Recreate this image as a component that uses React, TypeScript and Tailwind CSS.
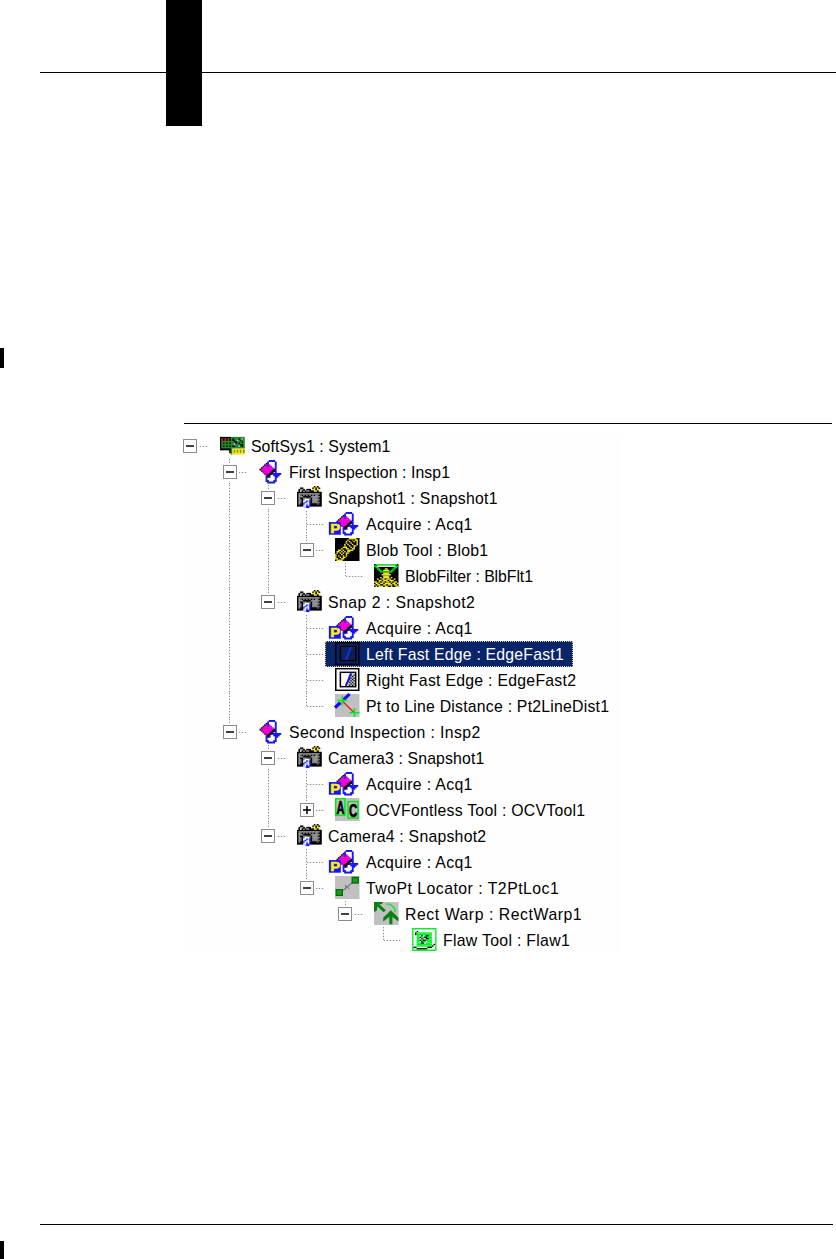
import { useLayoutEffect, useRef, useState, type ReactNode } from 'react'
import clsx from 'clsx'

type IconName =
  | 'board'
  | 'inspection'
  | 'camera'
  | 'acquire'
  | 'blob'
  | 'filter'
  | 'edge'
  | 'edgeSelected'
  | 'distance'
  | 'ocv'
  | 'locator'
  | 'warp'
  | 'flaw'

interface TreeNode {
  label: string
  width: number
  icon: IconName
  collapsed?: boolean
  selected?: boolean
  children?: TreeNode[]
}

// ── Tree data ─────────────────────────────────────────────────────────────────
const acquire: TreeNode = { label: 'Acquire : Acq1', width: 107, icon: 'acquire' }

const tree: TreeNode = {
  label: 'SoftSys1 : System1',
  width: 139,
  icon: 'board',
  children: [
    {
      label: 'First Inspection : Insp1',
      width: 161,
      icon: 'inspection',
      children: [
        {
          label: 'Snapshot1 : Snapshot1',
          width: 170,
          icon: 'camera',
          children: [
            acquire,
            {
              label: 'Blob Tool : Blob1',
              width: 122,
              icon: 'blob',
              children: [{ label: 'BlobFilter : BlbFlt1', width: 128, icon: 'filter' }],
            },
          ],
        },
        {
          label: 'Snap 2 : Snapshot2',
          width: 147,
          icon: 'camera',
          children: [
            acquire,
            { label: 'Left Fast Edge : EdgeFast1', width: 198, icon: 'edgeSelected', selected: true },
            { label: 'Right Fast Edge : EdgeFast2', width: 210, icon: 'edge' },
            { label: 'Pt to Line Distance : Pt2LineDist1', width: 243, icon: 'distance' },
          ],
        },
      ],
    },
    {
      label: 'Second Inspection : Insp2',
      width: 192,
      icon: 'inspection',
      children: [
        {
          label: 'Camera3 : Snapshot1',
          width: 156,
          icon: 'camera',
          children: [
            acquire,
            { label: 'OCVFontless Tool : OCVTool1', width: 219, icon: 'ocv', collapsed: true },
          ],
        },
        {
          label: 'Camera4 : Snapshot2',
          width: 158,
          icon: 'camera',
          children: [
            acquire,
            {
              label: 'TwoPt Locator : T2PtLoc1',
              width: 193,
              icon: 'locator',
              children: [
                {
                  label: 'Rect Warp : RectWarp1',
                  width: 177,
                  icon: 'warp',
                  children: [{ label: 'Flaw Tool : Flaw1', width: 127, icon: 'flaw' }],
                },
              ],
            },
          ],
        },
      ],
    },
  ],
}

// ── Pixel icons, 16 x 16 ──────────────────────────────────────────────────────
const palette: Record<string, string> = {
  K: '#000000',
  W: '#ffffff',
  G: '#909090',
  D: '#6a6a6a',
  Y: '#f4e62a',
  O: '#8a8200',
  B: '#1414f0',
  N: '#9db4ff',
  M: '#f000d8',
  P: '#90007c',
  R: '#d02818',
  E: '#1c8a26',
  L: '#00f022',
}

const bitmaps: Record<string, string[]> = {
  board: [
    '................',
    '................',
    'KKKKKKKEEEEEEEEE',
    'KRKRKRKEKEEEKENE',
    'KRKRKRKEKKENEKEE',
    'KEEEEEEEEKKEEEKE',
    'KEKEKEKEENKEKEEE',
    'KEEEEEEEENEEEKKE',
    'KEKEKEKEKKEENEKE',
    'KEEEEEEEEEEEEEEE',
    'KKKKKKKEYYYYYYYY',
    '......KEYOYOYOYO',
    '......KEYOYOYOYO',
    '.......EYYYYYYYY',
  ],
  inspection: [
    '.......BBBB.....',
    '......B....B....',
    '.....KB....B....',
    '....KMBM...B....',
    '...KMMBMM..B....',
    '..KMMMMMMM.B....',
    '.KMMMMMMMMKB....',
    '..PMMMMMMKKB....',
    '...PMMMMKK.B....',
    '....PMMKKBBBBBB.',
    '.....PKK..BBBB..',
    '.....BKB...BB...',
    '.....B.....B....',
    '.....B.....B....',
    '.....BB...BB....',
    '......BBBBB.....',
  ],
  camera: [
    '...........KYK..',
    '..KK......KYKYK.',
    '.KGGK.KKK.YYKYY.',
    '.KWK.KGGKKKYYK..',
    'KKKKKKKKKKKKKKKK',
    'KGGGGGGGGGGGGGDK',
    'KGDKDKDKDKDKGDKK',
    'KGGGKKKKKGGGGGDK',
    'KGKKGGDDDKGGGDKK',
    'KGDKDWWWDKGGGGDK',
    'KGDKWWBNBKGGGDKK',
    'KGDKNBNWBKGDGDDK',
    'KGKKBWNWBKKKKDKK',
    'KKKKNWBNBKKKKKKK',
    '.....NBB........',
  ],
  blob: [
    'KKKKKKKKKYYYYYKK',
    'KKKKKKKKYKKOKYYK',
    'KKKKKKKYKYKKYKYK',
    'KKKKKKKYKKYKKKYK',
    'KKKKKKYKYKKYKKYK',
    'KKKKKKYKKYKKYYKK',
    'KKKKKYYYKKYKYKKK',
    'KKKKYKKYYKKYYKKK',
    'KKYYKYKKYYYYKKKK',
    'KYYKYKYKYYKKKKKK',
    'KYKYKYKYYKKKKKKK',
    'YKKKYKKYKKKKKKKK',
    'YKYKKYKYKKKKKKKK',
    'YKKYKYYKKKKKKKKK',
    'YYKKYYKKKKKKKKKK',
    'KYYYYKKKKKKKKKKK',
  ],
  filter: [
    'KLLLLLLLLLLLLLLK',
    'LLWWWWWWWWWWWWLL',
    'KLLKKKKKKKKKKLLK',
    'KKLLKKKYYKKKLLKK',
    'KKKLLKYYYYKLLKKK',
    'KKKKLLLLLLLLKKKK',
    'KKKKKKYYYYKKKKKK',
    'KKKKKYYYYYYKKKKK',
    'KKKKKKYYYYKKKKKK',
    'KKKKYKYYYYKYKKKK',
    'KKYKKYYKYYYKKYKK',
    'KKKYYKYYYKYYYKKK',
    'YYKYKYYKYYKYKYYK',
    'KYYKYYKYYYYKYYKY',
    'YKYYKKYYKYYYKYYK',
    'KYKYYYKYYKKYKKYY',
  ],
  flaw: [
    'LLLLLLLLLLLLLLLL',
    'LWWWWWWWWWWWWWWL',
    'LWWKWWWWWWWWWWWL',
    'LWKLLLLLLLLLLWWL',
    'LWKLLLLLLLLLLWWL',
    'LWWLLWKWLKKLLWWL',
    'LWWLLKLLKKLLLWWL',
    'LWWLLWKLWKKLLWWL',
    'LWWLLKLKKLLLLWWL',
    'LWWLLWKLLWLLLWWL',
    'LWWLLLKKWLLLLWWL',
    'LWWLLLLLLLLLLWKL',
    'LWWLLLLLLLLLLKWL',
    'LKKWWWWWWWKKKWWL',
    'LWWKKKKKKKWWWWWL',
    'LLLLLLLLLLLLLLLL',
  ],
}

// Bitmaps that fill the whole square are drawn over a solid backing
const backings: Record<string, string> = { blob: '#000000', filter: '#000000', flaw: '#ffffff' }

// Runs overlap the next row a little so no seam shows at fractional scale
function Pixels({ name }: { name: string }) {
  const backing = backings[name]
  const skip = backing === '#000000' ? 'K' : backing ? 'W' : '.'

  return (
    <>
      {backing && <rect width="16" height="16" fill={backing} />}
      {bitmaps[name].flatMap((row, y) =>
        [...row.matchAll(/([A-Z])\1*/g)]
          .filter((run) => run[1] !== skip)
          .map((run) => (
            <rect
              key={`${run.index}-${y}`}
              x={run.index}
              y={y}
              width={run[0].length + (backing ? 0 : 0.15)}
              height={backing ? 1 : 1.35}
              fill={palette[run[1]]}
            />
          )),
      )}
    </>
  )
}

function EdgeDrawing({ paper, ink, dots }: { paper: string; ink: string; dots: string }) {
  return (
    <>
      <rect x="0.5" y="0.5" width="15" height="15" fill={paper} stroke="#000" />
      <rect x="3.5" y="3" width="10" height="10" fill={paper} stroke="#000" />
      <path d="M10.5 3.5H13V12.5H7.5Z" fill={dots} />
      <path d="M10 5h1M12 5h1M11 6h1M10 7h1M12 7h1M9 8h1M11 8h1M10 9h1M12 9h1M9 10h1M11 10h1M10 11h1M12 11h1M9 12h1M11 12h1" stroke="#111" strokeWidth="0.9" />
      <path d="M10.5 3.5L9.5 6L8.5 9L7 12.5" fill="none" stroke={ink} strokeWidth="1.3" />
    </>
  )
}

const drawings: Partial<Record<IconName, ReactNode>> = {
  acquire: (
    <>
      <Pixels name="inspection" />
      <rect x="-4" y="7" width="7.8" height="8.8" fill="#1414f0" />
      <text x="-3.1" y="14.4" textLength="6.4" lengthAdjust="spacingAndGlyphs" fontSize="8.8" fontWeight="bold" fill="#fff000" stroke="#fff000" strokeWidth="0.4" fontFamily="Liberation Sans, sans-serif">
        P
      </text>
    </>
  ),
  edge: <EdgeDrawing paper="#ffffff" ink="#1414f0" dots="#d0d0d0" />,
  edgeSelected: <EdgeDrawing paper="#0a246a" ink="#1432d8" dots="#0a2c7c" />,
  distance: (
    <>
      <rect width="16" height="16" fill="#c0c0c0" />
      <path d="M0 9.5L3.5 6M5.5 4L9.5 0" stroke="#1010f0" strokeWidth="2.2" />
      <path d="M4.5 4.5L12.5 13" stroke="#f02020" strokeWidth="0.9" />
      <path d="M1.5 4.5H8M4.7 1.5V8M9.5 13H16M12.7 9.8V16" stroke="#00ee20" strokeWidth="1.1" />
    </>
  ),
  ocv: (
    <>
      <rect width="16" height="16" fill="#c0c0c0" />
      <rect x="0.5" y="0.5" width="6" height="11.5" fill="#c0c0c0" stroke="#00e81c" />
      <rect x="8.5" y="2.5" width="6.5" height="11.5" fill="#c0c0c0" stroke="#00e81c" />
      <g fontFamily="Liberation Sans, sans-serif" fontSize="13" fontWeight="bold" stroke="#000" strokeWidth="0.5">
        <text x="1" y="11" textLength="5.2" lengthAdjust="spacingAndGlyphs">A</text>
        <text x="9.1" y="13" textLength="5.4" lengthAdjust="spacingAndGlyphs">C</text>
      </g>
    </>
  ),
  locator: (
    <>
      <rect width="16" height="16" fill="#c0c0c0" />
      <path d="M4 11L12 4M6.5 6.5L9.5 9M7 9.5V6.5" stroke="#777" strokeWidth="0.7" />
      <rect x="0.8" y="9.5" width="4" height="4" fill="#10a018" stroke="#06600c" strokeWidth="0.8" />
      <rect x="11.2" y="0.9" width="4" height="4" fill="#10a018" stroke="#06600c" strokeWidth="0.8" />
    </>
  ),
  warp: (
    <>
      <rect width="16" height="16" fill="#c0c0c0" />
      <path d="M8 1.5H10Q13.5 3 14 7" fill="none" stroke="#00ee20" strokeWidth="0.9" />
      <path d="M1.5 1L7 6.5M11 15.5V8" stroke="#088010" strokeWidth="2" />
      <path d="M0 0H6L5 1.6H2.5L1.8 6L0 7ZM11 5.8L16 11V13.5L11 9.6L6 13.5V11Z" fill="#088010" />
    </>
  ),
}

function Icon({ name }: { name: IconName }) {
  return (
    <svg viewBox="0 0 16 16" preserveAspectRatio="none" className="mt-px h-[23px] w-[24.5px] shrink-0 self-start overflow-visible">
      {drawings[name] ?? <Pixels name={name} />}
    </svg>
  )
}

function Label({ text, width }: { text: string; width: number }) {
  const ref = useRef<HTMLSpanElement>(null)
  const [spacing, setSpacing] = useState(0)

  useLayoutEffect(() => {
    // the transform narrows the glyphs to 93%, so the target is in unscaled pixels
    setSpacing((width / 0.93 - ref.current!.offsetWidth) / text.length)
  }, [text, width])

  return (
    <span style={{ width }}>
      <span
        ref={ref}
        className="inline-block origin-left scale-x-93 whitespace-nowrap text-[17px] leading-[28px]"
        style={{ letterSpacing: spacing }}
      >
        {text}
      </span>
    </span>
  )
}

// ── Connectors ────────────────────────────────────────────────────────────────
const dotsDown = 'w-px bg-[repeating-linear-gradient(to_bottom,#909090_0_1px,#e4e4e4_1px_3px)]'
const dotsAcross = 'h-px bg-[repeating-linear-gradient(to_right,#909090_0_1px,#e4e4e4_1px_3px)]'

function Expander({ collapsed, root }: { collapsed?: boolean; root: boolean }) {
  return (
    <span
      className={clsx(
        'absolute top-[6px] flex size-[14px] items-center justify-center border-[1.5px] border-[#8c8c8c] bg-white shadow-[0_0_0_2px_#fefefe]',
        root ? 'left-0' : 'left-[1.5px]',
      )}
    >
      <svg viewBox="0 0 10 10" className="size-[10px] shrink-0">
        <path d={collapsed ? 'M1 5H9M5 1V9' : 'M1 5H9'} stroke="#000" strokeWidth="1.5" />
      </svg>
    </span>
  )
}

function Branch({ node, guides = [], last = true, root = false }: { node: TreeNode; guides?: boolean[]; last?: boolean; root?: boolean }) {
  const expandable = Boolean(node.children) || node.collapsed

  return (
    <li>
      <div className="flex h-[26px]">
        {guides.map((open, i) => (
          <span key={i} className="w-[38.4px] shrink-0 pl-[8px]">
            {open && <span className={clsx('block h-full', dotsDown)} />}
          </span>
        ))}
        <span className="relative flex w-[37px] shrink-0 pl-[8px]">
          {!root && <span className={clsx(dotsDown, last ? 'h-[13px]' : 'h-full')} />}
          <span className={clsx('mt-[13px] w-[17px]', dotsAcross)} />
          {expandable && <Expander collapsed={node.collapsed} root={root} />}
        </span>
        <span
          className={clsx(
            '-ml-[10px] flex h-[26px] gap-[6.5px] pl-[10px] pr-[9px]',
            node.selected && 'bg-[#0a246a] text-white outline-1 -outline-offset-1 outline-dotted outline-[#d8c890]',
          )}
        >
          <Icon name={node.icon} />
          <Label text={node.label} width={node.width} />
        </span>
      </div>
      {node.children && (
        <ul>
          {node.children.map((child, i) => (
            <Branch key={child.label} node={child} guides={root ? [false] : [...guides, !last]} last={i === node.children!.length - 1} />
          ))}
        </ul>
      )}
    </li>
  )
}

// ── Page ──────────────────────────────────────────────────────────────────────
export default function App() {
  return (
    <main className="flex h-[1259px] w-[836px] flex-col overflow-hidden bg-white font-['Liberation_Sans',Arial,sans-serif] text-black">
      <header className="flex h-[126px] shrink-0 items-start pl-[40px]">
        <div className="mt-[72px] h-px w-[126px] bg-black" />
        <div className="h-full w-[36px] bg-black" />
        <div className="mt-[72px] h-px flex-1 bg-black" />
      </header>

      <div className="mt-[222px] h-[20px] w-[4px] shrink-0 bg-black" />

      <section className="ml-[183px] mt-[55px]">
        <div className="ml-px h-px w-[648px] bg-black" />
        <ul className="mt-[9px] w-[437px] bg-[#fefefe]">
          <Branch node={tree} root />
        </ul>
      </section>

      <footer className="mt-auto">
        <div className="ml-[40px] h-px w-[793px] bg-black" />
        <div className="mt-[16px] h-[18px] w-[4px] bg-black" />
      </footer>
    </main>
  )
}
